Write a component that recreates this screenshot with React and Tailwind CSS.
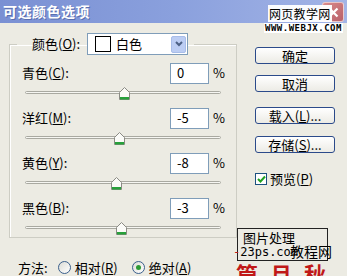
import React from "react";

const FONT = { fontFamily: '"Noto Sans CJK SC", "Noto Sans", sans-serif' };

function Thumb({ left }) {
  return (
    <svg
      className="absolute top-[-5px]"
      style={{ left: left - 5 }}
      width="11"
      height="13"
      viewBox="0 0 11 13"
    >
      <path d="M0.5 5.5 L5.5 0.5 L10.5 5.5 L10.5 12.5 L0.5 12.5 Z" fill="#fbfbf8" stroke="#8a8a84" strokeWidth="1" />
      <rect x="1" y="10" width="9" height="2.5" fill="#27a03a" />
    </svg>
  );
}

function Slider({ value }) {
  const left = ((value + 100) / 200) * 196;
  return (
    <div className="h-[16px] pl-[15px] flex items-center">
      <div className="relative w-[196px] h-[3px] rounded-full border border-[#a9a9a1] bg-[#f6f6f2]">
        <Thumb left={left} />
      </div>
    </div>
  );
}

function Row({ label, u, rest, value }) {
  return (
    <div className="flex flex-col">
      <div className="flex items-center h-[22px] pl-[12px] pr-[11px]">
        <span className="text-[13px] text-black">
          {label}(<span className="underline">{u}</span>){rest}
        </span>
        <div className="ml-auto w-[39px] h-[21px] border border-[#7f9db9] bg-white flex items-center pl-[6px] text-[13px]">
          {value}
        </div>
        <span className="ml-[4px] w-[12px] text-[13px]">%</span>
      </div>
      <Slider value={Number(value)} />
    </div>
  );
}

function Btn({ children }) {
  return (
    <div className="w-[80px] h-[17px] rounded-[3px] border border-[#2b4a8a] bg-gradient-to-b from-white to-[#ecebe5] flex items-center justify-center text-[13px] leading-none text-black">
      {children}
    </div>
  );
}

function Radio({ checked }) {
  return (
    <div className="w-[13px] h-[13px] rounded-full border border-[#3a5f8c] bg-gradient-to-br from-[#dcdcd6] to-white flex items-center justify-center">
      {checked && <div className="w-[5px] h-[5px] rounded-full bg-[#2c9a34]" />}
    </div>
  );
}

export default function App() {
  return (
    <div className="relative w-[347px] h-[276px] overflow-hidden bg-[#ecebe3]" style={FONT}>
      {/* title bar */}
      <div className="h-[23px] bg-gradient-to-r from-[#7a90d3] via-[#8aa0dd] to-[#a3b4e6] flex items-center pl-[3px]">
        <span className="text-white text-[14px] font-bold tracking-[0.5px] [text-shadow:1px_1px_0_#5a6fb0]">可选颜色选项</span>
      </div>

      <div className="flex pt-[10px]">
        {/* left */}
        <div className="flex flex-col pl-[9px]">
          <fieldset className="w-[228px] border border-[#cdcdc4] m-0 p-0 pb-[2px] shadow-[inset_1px_1px_0_#ffffff]">
            <legend className="ml-[7px] pl-[15px] pr-[6px]">
              <div className="flex items-center">
                <span className="text-[13px] w-[55px]">
                  颜色(<span className="underline">O</span>):
                </span>
                <div className="w-[101px] h-[22px] border border-[#7f9db9] bg-white flex items-center pl-[7px] pr-[1px]">
                  <div className="w-[16px] h-[16px] border border-black bg-white" />
                  <span className="ml-[5px] text-[13px]">白色</span>
                  <div className="ml-auto w-[15px] h-[17px] rounded-[2px] bg-[#bccdf3] border border-[#a8bde9] flex items-center justify-center">
                    <svg width="8" height="6" viewBox="0 0 8 6">
                      <path d="M1 1 L4 4 L7 1" fill="none" stroke="#4d6185" strokeWidth="2" />
                    </svg>
                  </div>
                </div>
              </div>
            </legend>
            <div className="flex flex-col gap-[7px] pt-[7px]">
              <Row label="青色" u="C" rest=":" value="0" />
              <Row label="洋红" u="M" rest=":" value="-5" />
              <Row label="黄色" u="Y" rest=":" value="-8" />
              <Row label="黑色" u="B" rest=":" value="-3" />
            </div>
          </fieldset>
          <div className="flex items-center mt-[20px] pl-[9px] text-[13px] gap-[4px]">
            <span className="mr-[6px]">方法:</span>
            <Radio />
            <span className="mr-[10px]">
              相对(<span className="underline">R</span>)
            </span>
            <Radio checked />
            <span>
              绝对(<span className="underline">A</span>)
            </span>
          </div>
        </div>

        {/* right */}
        <div className="flex flex-col pl-[18px] pt-[14px]">
          <Btn>确定</Btn>
          <div className="mt-[11px]">
            <Btn>取消</Btn>
          </div>
          <div className="mt-[15px]">
            <Btn>
              载入(<span className="underline">L</span>)...
            </Btn>
          </div>
          <div className="mt-[12px]">
            <Btn>
              存储(<span className="underline">S</span>)...
            </Btn>
          </div>
          <div className="mt-[16px] flex items-center gap-[3px] text-[13px]">
            <div className="w-[12px] h-[12px] border border-[#1c5180] bg-white flex items-center justify-center">
              <svg width="9" height="8" viewBox="0 0 9 8">
                <path d="M1 4 L3.5 6.5 L8 1.5" fill="none" stroke="#21a121" strokeWidth="2" />
              </svg>
            </div>
            <span>
              预览(<span className="underline">P</span>)
            </span>
          </div>
        </div>
      </div>

      {/* close button */}
      <div className="absolute left-[322px] top-[2px] w-[22px] h-[20px] rounded-[3px] bg-gradient-to-br from-[#d98a8a] to-[#b9606a] border border-white/60 flex items-center justify-center">
        <svg width="11" height="11" viewBox="0 0 11 11">
          <path d="M1.5 1.5 L9.5 9.5 M9.5 1.5 L1.5 9.5" stroke="white" strokeWidth="2.2" />
        </svg>
      </div>

      {/* top watermark */}
      <div className="absolute left-[268px] top-[5px] h-[17px] px-[1px] bg-white/95 text-[12px] leading-[17px] text-black whitespace-nowrap tracking-[0.3px]" style={{ fontFamily: '"Noto Sans CJK SC", sans-serif' }}>
        网页教学网
      </div>
      <div className="absolute left-[264px] top-[23px] h-[10px] px-[1px] bg-white text-[9px] leading-[10px] font-bold text-black tracking-[0.5px] whitespace-nowrap" style={{ fontFamily: '"DejaVu Sans Mono", monospace' }}>
        WWW.WEBJX.COM
      </div>

      {/* bottom-right watermark */}
      <div className="absolute left-[236px] top-[262px] text-[22px] leading-[22px] font-bold text-[#c01818] tracking-[12px] whitespace-nowrap" style={{ fontFamily: '"Noto Sans CJK SC", serif' }}>
        篇月秋
      </div>
      <div className="absolute left-[237px] top-[228px] w-[91px] h-[33px] border border-[#222] bg-[#ecebe3]/90">
        <div className="absolute left-[5px] top-[2px] text-[13px] leading-[14px] text-black whitespace-nowrap">图片处理</div>
        <div className="absolute left-[-5px] top-[17px] text-[12px] leading-[13px] text-black whitespace-nowrap" style={{ fontFamily: '"DejaVu Sans Mono", monospace' }}>
          <span className="text-[#c01818]">-</span>23ps.com
        </div>
        <div className="absolute left-[52px] top-[14px] text-[14px] leading-[16px] text-black whitespace-nowrap">教程网</div>
      </div>
    </div>
  );
}
